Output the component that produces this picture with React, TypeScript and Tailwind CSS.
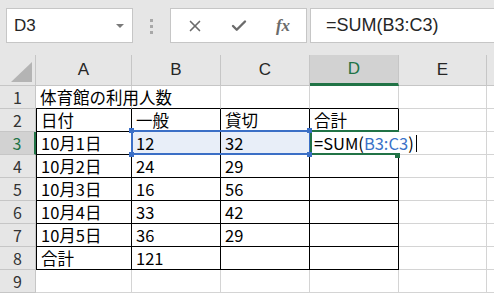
import { X, Check } from 'lucide-react'

// Spreadsheet column layout (px)
const cols = [
  { key: 'A', w: 'w-[96px]' },
  { key: 'B', w: 'w-[89px]' },
  { key: 'C', w: 'w-[89px]' },
  { key: 'D', w: 'w-[89px]' },
  { key: 'E', w: 'w-[88px]' },
]

const data: string[][] = [
  ['体育館の利用人数', '', '', '', ''],
  ['日付', '一般', '貸切', '合計', ''],
  ['10月1日', '12', '32', '', ''],
  ['10月2日', '24', '29', '', ''],
  ['10月3日', '16', '56', '', ''],
  ['10月4日', '33', '42', '', ''],
  ['10月5日', '36', '29', '', ''],
  ['合計', '121', '', '', ''],
  ['', '', '', '', ''],
]

const cellFont = { fontFamily: '"MS PGothic", "Noto Sans CJK JP", sans-serif' }

const Toolbar = () => (
  <div className="flex h-[55px] items-start bg-[#e6e6e6] pt-2">
    <div className="ml-[6px] flex h-[35px] w-[127px] items-center justify-between border border-[#c6c6c6] bg-white pl-[7px] pr-[8px]">
      <span className="text-[17px] text-[#262626]" style={{ fontFamily: '"Liberation Sans", Arial, sans-serif' }}>D3</span>
      <span className="h-0 w-0 border-x-[4px] border-t-[4px] border-x-transparent border-t-[#7a7a7a]" />
    </div>
    <div className="flex w-[37px] flex-col items-center gap-[3px] pt-[11px]">
      <span className="h-[3px] w-[3px] bg-[#a8a8a8]" />
      <span className="h-[3px] w-[3px] bg-[#a8a8a8]" />
      <span className="h-[3px] w-[3px] bg-[#a8a8a8]" />
    </div>
    <div className="flex h-[35px] w-[137px] items-center border border-[#c6c6c6] bg-white">
      <span className="flex w-[46px] justify-center pl-[2px]">
        <X size={18} strokeWidth={2.2} color="#6b6b6b" />
      </span>
      <span className="flex w-[44px] justify-center">
        <Check size={18} strokeWidth={3.2} color="#6b6b6b" />
      </span>
      <span
        className="flex w-[44px] justify-center text-[17px] font-bold italic text-[#6b6b6b]"
        style={{ fontFamily: '"Liberation Serif", "Times New Roman", serif' }}
      >
        fx
      </span>
    </div>
    <div className="ml-[3px] flex h-[35px] flex-1 items-center border border-r-0 border-[#c6c6c6] bg-white pl-[15px]">
      <span className="text-[18px] text-[#262626]" style={{ fontFamily: '"Liberation Sans", Arial, sans-serif' }}>
        =SUM(B3:C3)
      </span>
    </div>
  </div>
)

const HeaderRow = () => (
  <div className="flex h-[31px] bg-[#e6e6e6]" style={{ fontFamily: '"Liberation Sans", Arial, sans-serif' }}>
    <div className="relative h-full w-[36px] shrink-0 border-r border-b border-[#c6c6c6]">
      <span className="absolute right-[3px] bottom-[3px] h-0 w-0 border-b-[20px] border-l-[21px] border-b-[#b4b4b4] border-l-transparent" />
    </div>
    {cols.map((c) => {
      const sel = c.key === 'D'
      return (
        <div
          key={c.key}
          className={`${c.w} flex shrink-0 items-center justify-center border-r border-[#c6c6c6] text-[17px] ${
            sel ? 'border-b-[3px] border-b-[#217346] bg-[#d2d2d2] text-[#217346]' : 'border-b border-b-[#c6c6c6] text-[#262626]'
          }`}
        >
          {c.key}
        </div>
      )
    })}
    <div className="flex-1 border-b border-[#c6c6c6]" />
  </div>
)

const Row = ({ r }: { r: number }) => {
  const rowNo = r + 1
  const inTable = rowNo >= 2 && rowNo <= 8
  const selRow = rowNo === 3
  return (
    <div className="flex h-[23px]">
      <div
        className={`flex w-[36px] shrink-0 items-center justify-center border-b border-[#c6c6c6] text-[16px] ${
          selRow ? 'border-r-2 border-r-[#217346] bg-[#d2d2d2] text-[#217346]' : 'border-r border-r-[#c6c6c6] bg-[#e6e6e6] text-[#333]'
        }`}
        style={cellFont}
      >
        {rowNo}
      </div>
      {cols.map((c, ci) => {
        const tableCol = ci <= 3
        const editing = selRow && ci === 3
        const blackRight = inTable && tableCol && !editing
        const blackBottom = tableCol && rowNo >= 1 && rowNo <= 8
        const blackLeft = inTable && ci === 0
        const blue = selRow && (ci === 1 || ci === 2)
        return (
          <div
            key={c.key}
            className={`${c.w} flex shrink-0 items-end overflow-visible whitespace-nowrap border-r border-b pb-[3px] pl-[4px] text-[16.5px] leading-none text-black ${
              editing ? 'border-r-white' : blackRight ? 'border-r-black' : 'border-r-[#d4d4d4]'
            } ${blackBottom ? 'border-b-black' : 'border-b-[#d4d4d4]'} ${blackLeft ? 'border-l border-l-black' : ''} ${
              blue ? 'bg-[#e8eef8]' : ''
            }`}
            style={cellFont}
          >
            {editing ? (
              <span className="relative z-10 flex items-end">
                =SUM(<span className="text-[#3a72c8]">B3:C3</span>)
                <span className="ml-[2px] mb-[-1px] h-[17px] w-px bg-black" />
              </span>
            ) : (
              data[r][ci]
            )}
          </div>
        )
      })}
      <div className="flex-1 border-b border-[#d4d4d4]" />
    </div>
  )
}

export default function App() {
  return (
    <div className="h-[293px] w-[494px] overflow-hidden bg-white">
      <Toolbar />
      <div className="relative">
        <HeaderRow />
        {data.map((_, r) => (
          <Row key={r} r={r} />
        ))}

        {/* selection B3:C3 */}
        <div className="pointer-events-none absolute left-[131px] top-[75px] h-[25px] w-[180px] border-2 border-[#3b6fc6]" />
        {/* active cell D3 (editing, text overflows to the right) */}
        <div className="pointer-events-none absolute left-[310px] top-[75px] h-[25px] w-[89px] border-y-2 border-l-2 border-[#217346]" />
        {/* handles */}
        <div className="absolute left-[129px] top-[73px] h-[5px] w-[5px] bg-[#3b6fc6]" />
        <div className="absolute left-[129px] top-[97px] h-[5px] w-[5px] bg-[#3b6fc6]" />
        <div className="absolute left-[307px] top-[73px] h-[5px] w-[5px] bg-[#3b6fc6]" />
        <div className="absolute left-[307px] top-[97px] h-[5px] w-[5px] bg-[#3b6fc6]" />
        <div className="absolute left-[395px] top-[98px] h-[5px] w-[5px] bg-[#217346]" />
      </div>
    </div>
  )
}
